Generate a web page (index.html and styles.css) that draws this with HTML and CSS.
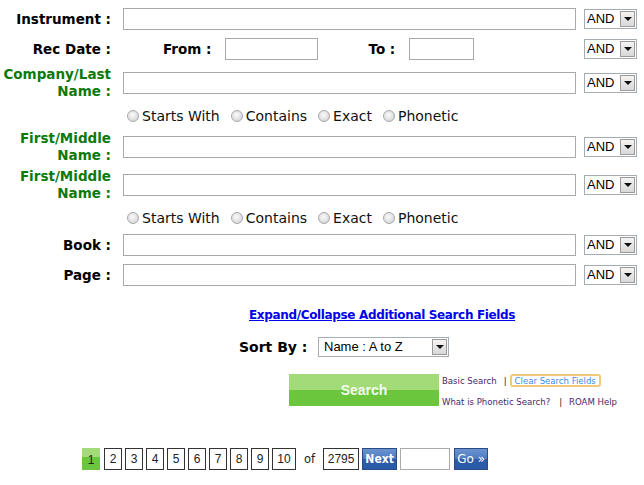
FILE: index.html
```html
<!DOCTYPE html>
<html>
<head>
<meta charset="utf-8">
<link rel="stylesheet" href="styles.css">
</head>
<body>
<div class="grid">
  <div class="lbl">Instrument :</div>
  <div class="cell"><input class="txt wide" type="text"></div>
  <div class="sel and"><span class="sel-text">AND</span><span class="sel-btn"><i></i></span></div>

  <div class="lbl">Rec Date :</div>
  <div class="cell dates">
    <span class="lbl2 from-l">From :</span><input class="txt from" type="text">
    <span class="lbl2 to-l">To :</span><input class="txt to" type="text">
  </div>
  <div class="sel and"><span class="sel-text">AND</span><span class="sel-btn"><i></i></span></div>

  <div class="lbl green">Company/Last<br>Name :</div>
  <div class="cell"><input class="txt wide" type="text"></div>
  <div class="sel and"><span class="sel-text">AND</span><span class="sel-btn"><i></i></span></div>

  <div class="radios">
    <label class="opt"><input type="radio" name="r1" class="rad">Starts With</label>
    <label class="opt"><input type="radio" name="r1" class="rad">Contains</label>
    <label class="opt"><input type="radio" name="r1" class="rad">Exact</label>
    <label class="opt"><input type="radio" name="r1" class="rad">Phonetic</label>
  </div>

  <div class="lbl green">First/Middle<br>Name :</div>
  <div class="cell"><input class="txt wide" type="text"></div>
  <div class="sel and"><span class="sel-text">AND</span><span class="sel-btn"><i></i></span></div>

  <div class="lbl green">First/Middle<br>Name :</div>
  <div class="cell"><input class="txt wide" type="text"></div>
  <div class="sel and"><span class="sel-text">AND</span><span class="sel-btn"><i></i></span></div>

  <div class="radios">
    <label class="opt"><input type="radio" name="r2" class="rad">Starts With</label>
    <label class="opt"><input type="radio" name="r2" class="rad">Contains</label>
    <label class="opt"><input type="radio" name="r2" class="rad">Exact</label>
    <label class="opt"><input type="radio" name="r2" class="rad">Phonetic</label>
  </div>

  <div class="lbl">Book :</div>
  <div class="cell"><input class="txt wide" type="text"></div>
  <div class="sel and"><span class="sel-text">AND</span><span class="sel-btn"><i></i></span></div>

  <div class="lbl">Page :</div>
  <div class="cell"><input class="txt wide" type="text"></div>
  <div class="sel and"><span class="sel-text">AND</span><span class="sel-btn"><i></i></span></div>
</div>

<div class="expand"><a href="#" class="expand-link">Expand/Collapse Additional Search Fields</a></div>

<div class="sort">
  <span class="sort-lbl">Sort By :</span>
  <div class="sel sortsel"><span class="sel-text">Name : A to Z</span><span class="sel-btn"><i></i></span></div>
</div>

<div class="search">
  <button class="search-btn">Search</button>
  <div class="links">
    <div class="links-row"><a href="#" class="lk">Basic Search</a><span class="pipe">|</span><a href="#" class="lk clear">Clear Search Fields</a></div>
    <div class="links-row row2"><a href="#" class="lk">What is Phonetic Search?</a><span class="pipe sp">|</span><a href="#" class="lk">ROAM Help</a></div>
  </div>
</div>

<div class="pager">
  <span class="pg cur">1</span>
  <span class="pg">2</span>
  <span class="pg">3</span>
  <span class="pg">4</span>
  <span class="pg">5</span>
  <span class="pg">6</span>
  <span class="pg">7</span>
  <span class="pg">8</span>
  <span class="pg">9</span>
  <span class="pg ten">10</span>
  <span class="of">of</span>
  <span class="pg total">2795</span>
  <button class="blue next">Next</button>
  <input class="pg-input" type="text">
  <button class="blue go">Go »</button>
</div>
</body>
</html>
```

FILE: styles.css
```css
html, body {
  margin: 0;
  padding: 0;
  background: #fff;
}
body {
  width: 644px;
  height: 485px;
  overflow: hidden;
  font-family: "DejaVu Sans", Verdana, sans-serif;
}

.grid {
  margin-top: 4px;
  display: grid;
  grid-template-columns: 123px 461px 53px;
  grid-template-rows: 30px 30px 38px 28px 34px 42px 24px 30px 30px;
  align-items: center;
}

.lbl {
  font-weight: bold;
  font-size: 13.5px;
  line-height: 17px;
  text-align: right;
  padding-right: 12px;
  color: #000;
  white-space: nowrap;
}
.lbl.green {
  color: #0b7a0b;
}

.cell {
  display: flex;
  align-items: center;
}

.txt {
  box-sizing: border-box;
  height: 22px;
  border: 1px solid #a9a9a9;
  margin: 0;
  padding: 0 3px;
  background: #fff;
  outline: none;
}
.txt.wide { width: 453px; }

.dates { font-size: 13.5px; }
.lbl2 {
  font-weight: bold;
  white-space: nowrap;
}
.from-l { margin-left: 40px; margin-right: 14px; }
.txt.from { width: 93px; }
.to-l { margin-left: 50px; margin-right: 14px; }
.txt.to { width: 65px; }

.sel {
  box-sizing: border-box;
  height: 20px;
  border: 1px solid #a5acb2;
  background: #fff;
  display: flex;
  align-items: center;
  justify-content: space-between;
  font-family: "Liberation Sans", Arial, sans-serif;
  font-size: 13px;
  color: #000;
}
.sel.and { width: 53px; }
.sel-text {
  padding-left: 2px;
  line-height: 18px;
}
.sel-btn {
  width: 15px;
  height: 16px;
  margin-right: 1px;
  box-sizing: border-box;
  border: 1px solid #9a9a9a;
  background: linear-gradient(#f4f4f4, #d8d8d8);
  display: flex;
  align-items: center;
  justify-content: center;
}
.sel-btn i {
  display: block;
  width: 0;
  height: 0;
  border-left: 4px solid transparent;
  border-right: 4px solid transparent;
  border-top: 4px solid #111;
}

.radios {
  grid-column: 2 / 4;
  display: flex;
  align-items: center;
  font-size: 14px;
  color: #111;
}
.opt {
  display: flex;
  align-items: center;
  margin-right: 11px;
  white-space: nowrap;
}
.rad {
  appearance: none;
  -webkit-appearance: none;
  width: 12px;
  height: 12px;
  margin: 0 3px 0 4px;
  border: 1px solid #a8a8a8;
  border-radius: 50%;
  background: radial-gradient(circle at 45% 40%, #fafafa 0%, #e2e2e2 55%, #c8c8c8 100%);
  box-sizing: border-box;
}
.opt + .opt .rad { margin-left: 0; }

.expand {
  margin-top: 16px;
  padding-left: 249px;
  line-height: 16px;
  height: 16px;
}
.expand-link {
  font-size: 12px;
  letter-spacing: -0.35px;
  font-weight: bold;
  color: #0000ee;
  text-decoration: underline;
  white-space: nowrap;
}

.sort {
  margin-top: 15px;
  padding-left: 239px;
  display: flex;
  align-items: center;
  height: 20px;
}
.sort-lbl {
  font-weight: bold;
  font-size: 14px;
  width: 79px;
  white-space: nowrap;
}
.sel.sortsel {
  width: 131px;
  padding-left: 3px;
}

.search {
  margin-top: 17px;
  padding-left: 289px;
  display: flex;
  align-items: flex-start;
}
.search-btn {
  width: 150px;
  height: 32px;
  border: none;
  margin: 0;
  padding: 0;
  background: linear-gradient(#a2db78 0%, #a2db78 50%, #6cc63d 50%, #6cc63d 100%);
  color: #f3fbee;
  font-family: "Liberation Sans", Arial, sans-serif;
  font-weight: bold;
  font-size: 14px;
}
.links {
  margin-left: 3px;
  font-family: "DejaVu Sans Condensed", "DejaVu Sans", sans-serif;
  font-size: 9.5px;
}
.links-row {
  display: flex;
  align-items: center;
  height: 13px;
  white-space: nowrap;
}
.links-row.row2 {
  margin-top: 8px;
}
.lk {
  color: #4a1f6b;
  text-decoration: none;
}
.pipe {
  color: #222;
  margin: 0 3px 0 7px;
}
.pipe.sp { margin: 0 7px 0 9px; }
.lk.clear {
  color: #3d8be6;
  border: 2px solid #f2c879;
  border-radius: 3px;
  padding: 0 3px;
  line-height: 9px;
  height: 9px;
  display: inline-flex;
  align-items: center;
}

.pager {
  margin-top: 40px;
  padding-left: 82px;
  display: flex;
  align-items: center;
  height: 22px;
  font-family: "Liberation Sans", Arial, sans-serif;
  font-size: 12px;
  color: #222;
}
.pg {
  box-sizing: border-box;
  width: 18px;
  height: 22px;
  border: 1px solid #333;
  margin-right: 3px;
  display: flex;
  align-items: center;
  justify-content: center;
  background: #fff;
}
.pg.cur {
  border: none;
  background: linear-gradient(#a2db78 0%, #a2db78 40%, #6cc63d 40%, #6cc63d 100%);
  margin-right: 4px;
  padding-top: 2px;
}
.pg.ten { width: 24px; }
.of {
  margin: 0 8px 0 5px;
  font-family: "DejaVu Sans", Verdana, sans-serif;
  font-size: 11.5px;
}
.pg.total { width: 36px; margin-right: 3px; }
.blue {
  box-sizing: border-box;
  height: 22px;
  margin: 0;
  padding: 0;
  border: 1px solid #284d86;
  background: linear-gradient(#6a93d0 0%, #4d7bc1 50%, #2a5ba9 52%, #2a5ba9 100%);
  color: #fff;
  font-family: "DejaVu Sans", Verdana, sans-serif;
  font-size: 12px;
}
.blue.next { width: 35px; font-weight: bold; font-family: "DejaVu Sans Condensed", "DejaVu Sans", sans-serif; }
.pg-input {
  box-sizing: border-box;
  width: 50px;
  height: 22px;
  margin: 0 4px 0 3px;
  border: 1px solid #aaa;
  padding: 0;
}
.blue.go { width: 34px; }
```
